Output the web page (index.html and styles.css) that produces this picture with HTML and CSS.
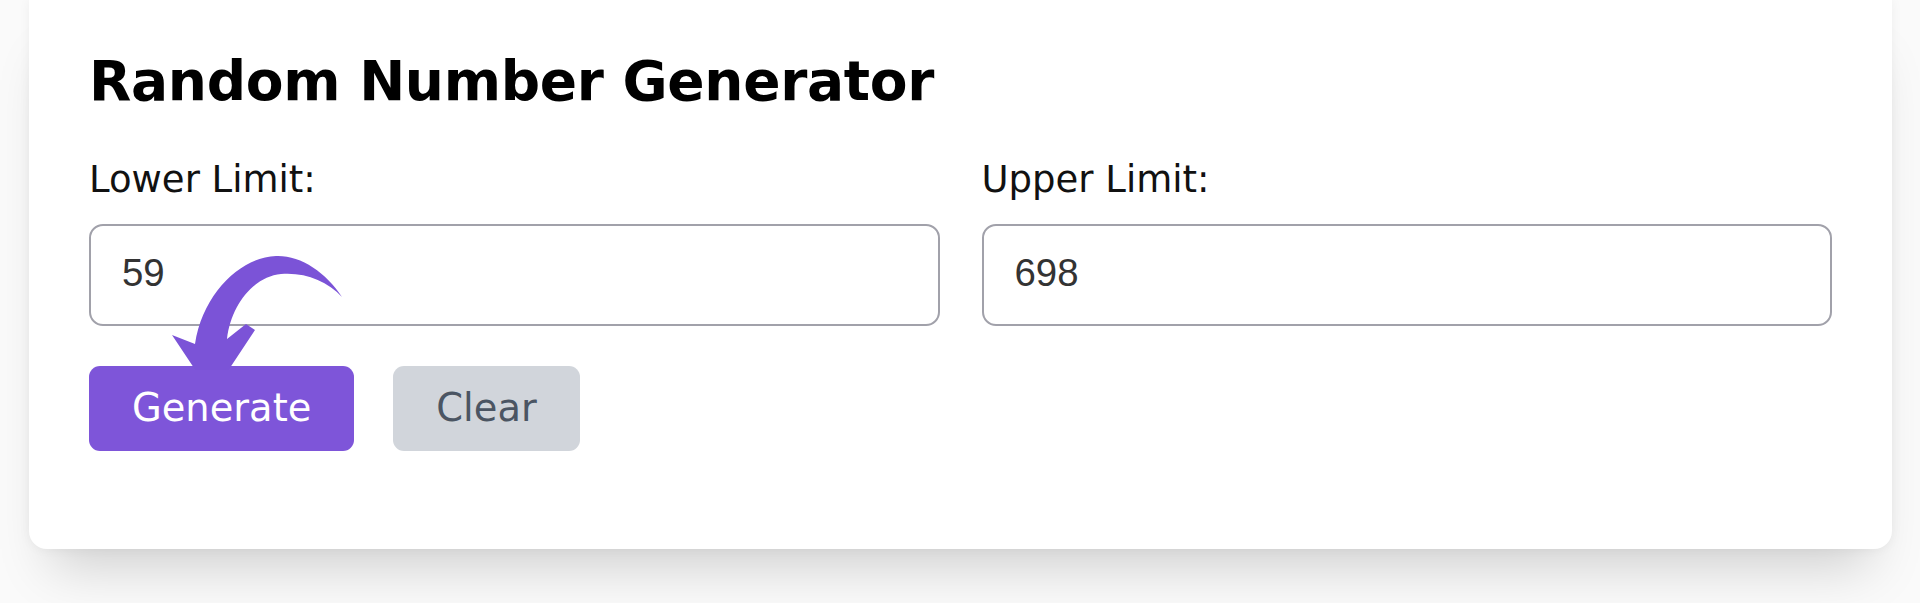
FILE: index.html
```html
<!DOCTYPE html>
<html lang="en">
<head>
    <meta charset="UTF-8">
    <meta name="viewport" content="width=device-width, initial-scale=1.0">
    <title>Random Number Generator</title>
    <link rel="stylesheet" href="styles.css">
</head>
<body>
    <main class="card">
        <h1 class="title">Random Number Generator</h1>
        <div class="fields">
            <div class="field">
                <label for="lower">Lower Limit:</label>
                <input type="number" id="lower" value="59">
            </div>
            <div class="field">
                <label for="upper">Upper Limit:</label>
                <input type="number" id="upper" value="698">
            </div>
        </div>
        <div class="actions">
            <button type="button" class="button generate">Generate</button>
            <button type="button" class="button clear">Clear</button>
        </div>
        <!-- pointer drawn over the form -->
        <svg class="arrow" viewBox="160 250 200 120" aria-hidden="true">
            <path d="M342 297 C326 272 300 255 276 256 C242 257 203 292 195 344 L172 335 L212 395 L255 330 L246 324 L227 339 C231 305 253 277 281 274 C305 272 327 281 342 297 Z"/>
        </svg>
    </main>
</body>
</html>
```

FILE: styles.css
```css
* {
    margin: 0;
    padding: 0;
    box-sizing: border-box;
}

body {
    font-family: "DejaVu Sans", sans-serif;
    background-color: #fafafa;
    min-height: 100vh;
    padding: 0 28px 0 29px;
}

.card {
    position: relative;
    padding: 53px 60px 98px;
    background: white;
    border-radius: 0 0 18px 18px;
    box-shadow: 0 40px 50px -22px rgba(0, 0, 0, 0.17), 0 0 12px rgba(0, 0, 0, 0.05);
}

.title {
    font-size: 55px;
    line-height: 56px;
    font-weight: 700;
    letter-spacing: -0.3px;
    color: #000;
    margin-bottom: 49px;
}

.fields {
    display: grid;
    grid-template-columns: 1fr 1fr;
    gap: 42px;
}

label {
    display: block;
    font-size: 37px;
    line-height: 44px;
    color: #111;
    margin-bottom: 22px;
}

input {
    display: block;
    width: 100%;
    height: 102px;
    padding: 0 31px 4px;
    border: 2px solid #a1a1aa;
    border-radius: 14px;
    font-family: "Liberation Sans", Arial, sans-serif;
    font-size: 38.4px;
    color: #333;
    outline: none;
}

input::-webkit-inner-spin-button,
input::-webkit-outer-spin-button {
    -webkit-appearance: none;
}

.actions {
    display: flex;
    gap: 39px;
    margin-top: 40px;
}

.button {
    height: 85px;
    padding: 0 43px 3px;
    border: none;
    border-radius: 11px;
    font-family: inherit;
    font-size: 38.4px;
    cursor: pointer;
}

.generate {
    background-color: #7e55d9;
    color: white;
}

.clear {
    background-color: #d1d5db;
    color: #4b5563;
}

.arrow {
    position: absolute;
    left: 131px;
    top: 250px;
    width: 200px;
    height: 120px;
    fill: #7b53d7;
}
```
